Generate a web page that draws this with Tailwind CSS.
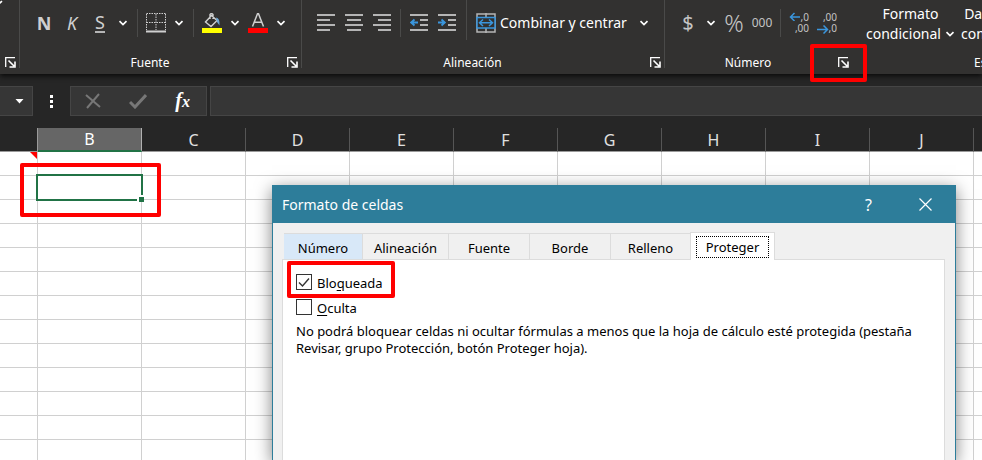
<!DOCTYPE html>
<html lang="es">
<head>
<meta charset="utf-8">
<title>Formato de celdas</title>
<script src="https://cdn.jsdelivr.net/npm/@tailwindcss/browser@4"></script>
</head>
<body class="relative h-screen overflow-hidden bg-[#262626] font-['Noto_Sans','Open_Sans',sans-serif] text-white">
<svg class="hidden">
  <symbol id="chev" viewBox="0 0 10 6"><path d="M1.500 1.200 5 4.500 8.500 1.200" fill="none" stroke="currentColor" stroke-width="1.700"/></symbol>
  <symbol id="launch" viewBox="0 0 11 11"><path d="M.7 10V.7H10" fill="none" stroke="currentColor" stroke-width="1.300"/><path d="M3.500 3.500 9 9M10 4.500V10H4.500" fill="none" stroke="currentColor" stroke-width="1.600"/></symbol>
</svg>

<div class="flex h-screen flex-col overflow-hidden">
<header class="relative z-10 flex h-[74px] shrink-0 overflow-hidden bg-[#323130] shadow-[0_2px_5px_#0a0a0a]">
  <section class="relative w-5 shrink-0">
    <svg class="absolute left-0 top-0 h-2 w-3" viewBox="0 0 12 8"><path d="M-4 0 -.5 3.200 2 1.200" fill="none" stroke="white" stroke-width="1.700"/></svg>
    <button aria-label="Más opciones del portapapeles" class="absolute bottom-[6px] right-1 size-[11px]"><svg class="size-[11px]"><use href="#launch"/></svg></button>
  </section>

  <section class="relative flex w-[282px] shrink-0 flex-col before:absolute before:-left-px before:h-[68px] before:w-px before:bg-[#4a4a49]">
    <div class="flex h-[46px] items-center pl-[10px] text-[#cfcfcf]">
      <button class="w-7 text-lg font-bold leading-5">N</button>
      <button class="w-7 text-lg italic leading-5">K</button>
      <button class="flex w-7 flex-col items-center text-lg leading-5"><span class="border-b-2 border-[#b5b5b5] leading-[17px]">S</span></button>
      <button aria-label="Subrayado" class="flex w-[18px] justify-center text-white"><svg class="h-[6px] w-[10px]"><use href="#chev"/></svg></button>
      <i class="ml-[5px] mr-1 h-7 w-px bg-[#4a4a49]"></i>
      <button aria-label="Bordes" class="flex w-7 justify-center"><svg class="size-5" viewBox="0 0 20 20" fill="none" stroke="#d0d0d0"><path d="M.5 .5h19M.5 9.500h19M.5 1v16M10 1v16M19.500 1v16" stroke-dasharray="1.500 1"/><path d="M0 18.500h20" stroke-width="2"/></svg></button>
      <button aria-label="Tipos de borde" class="flex w-[18px] justify-center text-white"><svg class="h-[6px] w-[10px]"><use href="#chev"/></svg></button>
      <i class="ml-[5px] mr-1 h-7 w-px bg-[#4a4a49]"></i>
      <button aria-label="Color de relleno" class="flex w-7 justify-center"><svg class="size-5" viewBox="0 0 20 20"><path d="M9.500 2.500 3.500 9 9 13.500 15 7.500 9.500 2.500ZM8 6V1.500Q9.500-.5 11 1.500V6" fill="none" stroke="#cfcfcf" stroke-width="1.400"/><path d="M14 4.500Q18 5 17.500 12.500L15 9Z" fill="#6fa8d6"/><path d="M0 15h20v5H0z" fill="#ff0"/></svg></button>
      <button aria-label="Colores de relleno" class="flex w-[18px] justify-center text-white"><svg class="h-[6px] w-[10px]"><use href="#chev"/></svg></button>
      <button aria-label="Color de fuente" class="flex w-7 justify-center"><svg class="size-5" viewBox="0 0 20 20"><path d="M4.500 13.500 9.500.8h1L15.500 13.500M6.200 9.200h7.600" fill="none" stroke="#cfcfcf" stroke-width="1.500"/><path d="M0 15h20v5H0z" fill="red"/></svg></button>
      <button aria-label="Colores de fuente" class="flex w-[18px] justify-center text-white"><svg class="h-[6px] w-[10px]"><use href="#chev"/></svg></button>
    </div>
    <h2 class="pt-2 pr-[22px] text-center text-xs leading-[18px]">Fuente</h2>
    <button aria-label="Más opciones de fuente" class="absolute bottom-[6px] right-1 size-[11px]"><svg class="size-[11px]"><use href="#launch"/></svg></button>
  </section>

  <section class="relative flex w-[363px] shrink-0 flex-col before:absolute before:-left-px before:h-[68px] before:w-px before:bg-[#4a4a49]">
    <div class="flex h-[46px] items-center pl-[10px] text-[#b5b5b5]">
      <button aria-label="Alinear a la izquierda" class="flex w-7 justify-center"><svg class="h-[18px] w-[18px]" viewBox="0 0 18 18" stroke="currentColor" stroke-width="2"><path d="M0 1h18M0 6h13M0 11h18M0 16h13"/></svg></button>
      <button aria-label="Centrar" class="flex w-7 justify-center"><svg class="h-[18px] w-[18px]" viewBox="0 0 18 18" stroke="currentColor" stroke-width="2"><path d="M0 1h18M2 6h14M0 11h18M2 16h14"/></svg></button>
      <button aria-label="Alinear a la derecha" class="flex w-7 justify-center"><svg class="h-[18px] w-[18px]" viewBox="0 0 18 18" stroke="currentColor" stroke-width="2"><path d="M0 1h18M5 6h13M0 11h18M5 16h13"/></svg></button>
      <i class="mx-1 h-7 w-px bg-[#4a4a49]"></i>
      <button aria-label="Disminuir sangría" class="flex w-7 justify-center"><svg class="h-[18px] w-[18px]" viewBox="0 0 18 18" fill="none" stroke="currentColor" stroke-width="2"><path d="M0 1h18M10 6h8M10 11h8M0 16h18"/><path d="M8 8.500H1M4.500 5.500 1.200 8.500 4.500 11.500" stroke="#3a96dd" stroke-width="1.800"/></svg></button>
      <button aria-label="Aumentar sangría" class="flex w-7 justify-center"><svg class="h-[18px] w-[18px]" viewBox="0 0 18 18" fill="none" stroke="currentColor" stroke-width="2"><path d="M0 1h18M10 6h8M10 11h8M0 16h18"/><path d="M0 8.500h7M3.500 5.500 6.800 8.500 3.500 11.500" stroke="#3a96dd" stroke-width="1.800"/></svg></button>
      <i class="ml-[5px] h-10 w-px self-start bg-[#4a4a49]"></i>
      <button class="flex items-center gap-1 pl-[9px] text-sm text-white"><svg class="size-5" viewBox="0 0 20 20" fill="none"><path d="M1 1h18v18H1zM10 0v5M10 15v5" stroke="#b5b5b5" stroke-width="1.500"/><path d="M1 4.500h18v10.500H1z" fill="#323130" stroke="#3a96dd" stroke-width="1.500"/><path d="M3.500 9.800h13M7 6.500 3.500 9.800 7 13M13 6.500l3.500 3.300L13 13" stroke="#3a96dd" stroke-width="1.500"/></svg><span>Combinar y centrar</span></button>
      <button aria-label="Opciones de combinar" class="ml-auto mr-3 flex w-[18px] justify-center text-white"><svg class="h-[6px] w-[10px]"><use href="#chev"/></svg></button>
    </div>
    <h2 class="pt-2 pr-[22px] text-center text-xs leading-[18px]">Alineación</h2>
    <button aria-label="Más opciones de alineación" class="absolute bottom-[6px] right-1 size-[11px]"><svg class="size-[11px]"><use href="#launch"/></svg></button>
  </section>

  <section class="relative flex w-[188px] shrink-0 flex-col before:absolute before:-left-px before:h-[68px] before:w-px before:bg-[#4a4a49]">
    <div class="flex h-[46px] items-center pl-[9px] text-[#c4c4c4]">
      <button class="w-7 text-xl">$</button>
      <button aria-label="Formatos de moneda" class="flex w-[18px] justify-center text-white"><svg class="h-[6px] w-[10px]"><use href="#chev"/></svg></button>
      <button class="w-7 text-center text-2xl font-light leading-7">%</button>
      <button class="w-7 text-xs">000</button>
      <i class="mx-1 h-7 w-px bg-[#4a4a49]"></i>
      <button aria-label="Aumentar decimales" class="relative flex w-7 flex-col items-end pr-1 text-[10px] leading-[11px]"><span>,0</span><span>,00</span><svg class="absolute left-1 top-0 h-[9px] w-3" viewBox="0 0 12 9"><path d="M11 5H1.500M5.500 1 1.500 5l4 4" fill="none" stroke="#3a96dd" stroke-width="1.500"/></svg></button>
      <button aria-label="Disminuir decimales" class="relative flex w-7 flex-col items-end pr-1 text-[10px] leading-[11px]"><span>,00</span><span>,0</span><svg class="absolute bottom-0 left-1 h-[9px] w-3" viewBox="0 0 12 9"><path d="M0 4.500h10.500M6.500 .5l4 4-4 4" fill="none" stroke="#3a96dd" stroke-width="1.500"/></svg></button>
    </div>
    <h2 class="pt-2 pr-[22px] text-center text-xs leading-[18px]">Número</h2>
    <button aria-label="Más opciones de número" class="absolute bottom-[6px] right-1 size-[11px]"><svg class="size-[11px]"><use href="#launch"/></svg></button>
  </section>

  <section class="relative flex min-w-0 flex-1 flex-col overflow-hidden border-l border-[#4a4a49]/0 before:absolute before:-left-px before:h-[68px] before:w-px before:bg-[#4a4a49]">
    <div class="flex h-[46px] gap-[6px] pl-3 pt-1 text-sm leading-5">
      <button class="flex shrink-0 flex-col items-center"><span>Formato</span><span class="flex items-center gap-1">condicional<svg class="h-[6px] w-[10px]"><use href="#chev"/></svg></span></button>
      <button class="flex shrink-0 flex-col items-center whitespace-nowrap"><span>Dar formato</span><span class="flex items-center gap-1">como tabla<svg class="h-[6px] w-[10px]"><use href="#chev"/></svg></span></button>
    </div>
    <h2 class="whitespace-nowrap pl-[120px] pt-2 text-xs leading-[18px]">Estilos</h2>
  </section>
</header>

<div class="flex h-[54px] shrink-0 items-start pt-3">
  <button aria-label="Cuadro de nombres" class="flex h-[30px] w-[33px] items-center justify-end border border-l-0 border-[#454545] bg-[#363636] pr-2"><svg class="h-[5px] w-[9px]" viewBox="0 0 9 5"><path d="M.5 0h8l-4 4.500Z" fill="white"/></svg></button>
  <div class="flex h-[30px] w-[37px] flex-col items-center justify-center gap-[2px]"><i class="size-[3px] bg-white"></i><i class="size-[3px] bg-white"></i><i class="size-[3px] bg-white"></i></div>
  <div class="flex h-[30px] w-[137px] items-center justify-between border border-[#454545] bg-[#363636] pl-[14px] pr-4">
    <button aria-label="Cancelar"><svg class="h-4 w-4" viewBox="0 0 16 16"><path d="M1 2 15 14M14 1 2 15" stroke="#777" stroke-width="2"/></svg></button>
    <button aria-label="Introducir"><svg class="h-4 w-[18px]" viewBox="0 0 18 16"><path d="M1 9l5 5L17 2" fill="none" stroke="#777" stroke-width="3"/></svg></button>
    <button aria-label="Insertar función" class="font-['Liberation_Serif',serif] text-xl font-bold italic leading-6"><span>f</span><span class="text-base">x</span></button>
  </div>
  <input aria-label="Barra de fórmulas" class="ml-[3px] h-[30px] min-w-0 flex-1 border border-r-0 border-[#454545] bg-[#363636] px-2 text-sm">
</div>

<div class="relative min-h-0 flex-1 overflow-hidden">
  <table class="w-[1078px] table-fixed border-separate border-spacing-0">
    <thead><tr id="cols"></tr></thead>
    <tbody id="rows"></tbody>
  </table>
  <svg class="absolute left-[30px] top-6 size-[7px]" viewBox="0 0 7 7"><path d="M0 0h7v7Z" fill="red"/></svg>
  <div class="absolute left-9 top-[46px] h-[27px] w-[107px] border-2 border-[#217346]"><i class="absolute -bottom-[3px] -right-[3px] size-[7px] border-l-2 border-t-2 border-white bg-[#217346]"></i></div>
</div>
</div>

<div role="dialog" aria-labelledby="title" class="absolute bottom-0 left-[272px] right-[26px] top-[185px] flex flex-col border border-b-0 border-[#2d7d9a] bg-[#f0f0f0] text-black shadow-[0_4px_16px_rgba(0,0,0,0.5)]">
  <div class="flex h-[37px] shrink-0 items-center bg-[#2d7d9a] pl-[9px] text-white">
    <h1 id="title" class="flex-1 text-sm">Formato de celdas</h1>
    <button aria-label="Ayuda" class="w-[57px] text-base">?</button>
    <button aria-label="Cerrar" class="mr-[1px] flex w-[57px] justify-center"><svg class="size-[13px]" viewBox="0 0 13 13"><path d="M.5 .5l12 12M12.500 .5l-12 12" stroke="white" stroke-width="1.200"/></svg></button>
  </div>
  <div role="tablist" class="relative z-10 -mb-px mt-[9px] flex shrink-0 items-end pl-[11px] text-[13px] leading-5">
    <button role="tab" class="mb-px h-[26px] w-[79px] border-r border-t border-[#dcdcdc] bg-[#d8e8f8] pt-0.5">Número</button>
    <button role="tab" class="mb-px h-[26px] w-[86px] border-r border-t border-[#dcdcdc] pt-0.5">Alineación</button>
    <button role="tab" class="mb-px h-[26px] w-[81px] border-r border-t border-[#dcdcdc] pt-0.5">Fuente</button>
    <button role="tab" class="mb-px h-[26px] w-[81px] border-r border-t border-[#dcdcdc] pt-0.5">Borde</button>
    <button role="tab" class="mb-px h-[26px] w-[79px] border-t border-[#dcdcdc] pt-0.5">Relleno</button>
    <button role="tab" aria-selected="true" class="flex h-7 w-[85px] items-center justify-center border border-b-0 border-[#dcdcdc] bg-white"><span class="flex h-[22px] w-[73px] items-center justify-center border border-dotted border-black">Proteger</span></button>
  </div>
  <div role="tabpanel" class="ml-[9px] mr-[10px] flex-1 border border-b-0 border-[#dcdcdc] bg-white pl-[13px] pt-[14px] text-[13px] leading-[17px]">
    <div class="mb-[9px] flex h-4 items-center gap-[5px]">
      <span class="relative flex"><input id="bloq" type="checkbox" checked class="peer size-4 appearance-none border border-[#333] bg-white"><svg class="pointer-events-none absolute left-0 top-0 hidden size-4 peer-checked:block" viewBox="0 0 16 16"><path d="M3 8.500 6.500 12 13 4.500" fill="none" stroke="#333" stroke-width="1.400"/></svg></span>
      <label for="bloq" class="pt-0.5">Blo<u class="underline-offset-2">q</u>ueada</label>
    </div>
    <div class="mb-2 flex h-4 items-center gap-[5px]">
      <input id="oculta" type="checkbox" class="size-4 appearance-none border border-[#333] bg-white">
      <label for="oculta" class="pt-0.5"><u class="underline-offset-2">O</u>culta</label>
    </div>
    <p class="max-w-[620px]">No podrá bloquear celdas ni ocultar fórmulas a menos que la hoja de cálculo esté protegida (pestaña Revisar, grupo Protección, botón Proteger hoja).</p>
  </div>
</div>

<i class="pointer-events-none absolute left-[810px] top-[44px] z-20 h-[38px] w-[57px] rounded-xs border-4 border-[#f00]"></i>
<i class="pointer-events-none absolute left-[20px] top-[163px] z-20 h-[54px] w-[141px] rounded-xs border-4 border-[#f00]"></i>
<i class="pointer-events-none absolute left-[287px] top-[261px] z-20 h-[37px] w-[108px] rounded-xs border-4 border-[#f00]"></i>

<script>
  const names = ['', 'B', 'C', 'D', 'E', 'F', 'G', 'H', 'I', 'J', ''];
  document.getElementById('cols').innerHTML = names.map((n, i) => {
    const base = 'h-6 p-0 text-base font-normal leading-[22px] border-b';
    if (i === 0) return `<th class="${base} w-[38px] border-r border-[#9a9a9a]"></th>`;
    if (n === 'B') return `<th class="${base} w-[104px] border-r border-r-[#b0b0b0] border-b-2 border-b-[#217346] bg-[#666]">${n}</th>`;
    return `<th class="${base} w-[104px] border-r border-[#9a9a9a] border-r-[#555] text-[#e0e0e0]">${n}</th>`;
  }).join('');
  document.getElementById('rows').innerHTML = Array.from({ length: 14 }, () =>
    '<tr>' + names.map(() => '<td class="h-6 border-b border-r border-[#d0d0d0] bg-white p-0"></td>').join('') + '</tr>').join('');
</script>
</body>
</html>
